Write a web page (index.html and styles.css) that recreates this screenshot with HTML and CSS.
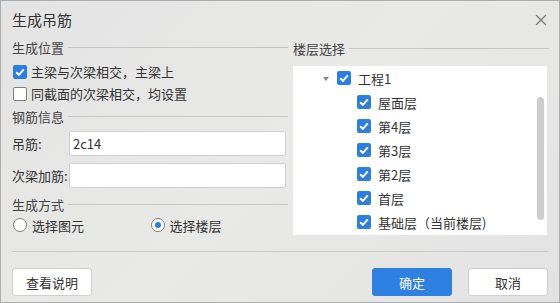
FILE: index.html
```html
<!DOCTYPE html>
<html lang="zh">
<head>
<meta charset="utf-8">
<link rel="stylesheet" href="styles.css">
</head>
<body>
<div class="dialog">
  <div class="header">
    <span class="title">生成吊筋</span>
    <svg class="close" width="12" height="12" viewBox="0 0 12 12"><path d="M1 1L11 11M11 1L1 11" stroke="#7a7a7a" stroke-width="1.3" fill="none"/></svg>
  </div>
  <div class="main">
    <div class="left">
      <div class="sec"><span>生成位置</span><i class="rule"></i></div>
      <label class="row cbrow"><span class="cb on"><svg viewBox="0 0 14 14" width="14" height="14"><path d="M3.2 7.2L5.9 9.8L10.8 4.4" stroke="#fff" stroke-width="2" fill="none"/></svg></span>主梁与次梁相交，主梁上</label>
      <label class="row cbrow"><span class="cb"></span>同截面的次梁相交，均设置</label>
      <div class="sec sec2"><span>钢筋信息</span><i class="rule"></i></div>
      <div class="field"><span class="lbl">吊筋:</span><div class="input">2c14</div></div>
      <div class="field f2"><span class="lbl">次梁加筋:</span><div class="input"></div></div>
      <div class="sec sec3"><span>生成方式</span><i class="rule"></i></div>
      <div class="radios">
        <label class="radio-item"><span class="rd"></span>选择图元</label>
        <label class="radio-item"><span class="rd on"></span>选择楼层</label>
      </div>
    </div>
    <div class="right">
      <div class="sec"><span>楼层选择</span><i class="rule"></i></div>
      <div class="tree">
        <div class="node lv0"><span class="arrow"></span><span class="cb on"><svg viewBox="0 0 14 14" width="14" height="14"><path d="M3.2 7.2L5.9 9.8L10.8 4.4" stroke="#fff" stroke-width="2" fill="none"/></svg></span>工程1</div>
        <div class="node lv1"><span class="cb on"><svg viewBox="0 0 14 14" width="14" height="14"><path d="M3.2 7.2L5.9 9.8L10.8 4.4" stroke="#fff" stroke-width="2" fill="none"/></svg></span>屋面层</div>
        <div class="node lv1"><span class="cb on"><svg viewBox="0 0 14 14" width="14" height="14"><path d="M3.2 7.2L5.9 9.8L10.8 4.4" stroke="#fff" stroke-width="2" fill="none"/></svg></span>第4层</div>
        <div class="node lv1"><span class="cb on"><svg viewBox="0 0 14 14" width="14" height="14"><path d="M3.2 7.2L5.9 9.8L10.8 4.4" stroke="#fff" stroke-width="2" fill="none"/></svg></span>第3层</div>
        <div class="node lv1"><span class="cb on"><svg viewBox="0 0 14 14" width="14" height="14"><path d="M3.2 7.2L5.9 9.8L10.8 4.4" stroke="#fff" stroke-width="2" fill="none"/></svg></span>第2层</div>
        <div class="node lv1"><span class="cb on"><svg viewBox="0 0 14 14" width="14" height="14"><path d="M3.2 7.2L5.9 9.8L10.8 4.4" stroke="#fff" stroke-width="2" fill="none"/></svg></span>首层</div>
        <div class="node lv1"><span class="cb on"><svg viewBox="0 0 14 14" width="14" height="14"><path d="M3.2 7.2L5.9 9.8L10.8 4.4" stroke="#fff" stroke-width="2" fill="none"/></svg></span>基础层（当前楼层)</div>
        <div class="scrollbar"></div>
      </div>
    </div>
  </div>
  <div class="footer">
    <button class="btn">查看说明</button>
    <span class="spacer"></span>
    <button class="btn primary">确定</button>
    <button class="btn">取消</button>
  </div>
</div>
</body>
</html>
```
FILE: styles.css
```css
html, body {
  margin: 0;
  padding: 0;
}
body {
  width: 560px;
  height: 303px;
  font-family: "Noto Sans CJK SC", "Noto Sans", sans-serif;
  font-size: 13px;
  color: #333;
}
.dialog {
  box-sizing: border-box;
  width: 560px;
  height: 303px;
  border: 1px solid #adadad;
  background: linear-gradient(135deg, #e4e4e4 0%, #e9e9e8 50%, #e3e3e3 100%);
  display: flex;
  flex-direction: column;
}
.header {
  height: 37px;
  display: flex;
  align-items: center;
  padding: 0 12px 0 11px;
}
.title {
  font-size: 15px;
  color: #333;
  flex: 1;
  line-height: 20px;
}
.close {
  margin-top: 1px;
}
.main {
  display: flex;
  height: 198px;
}
.left {
  width: 276px;
  padding-left: 11px;
  display: flex;
  flex-direction: column;
}
.right {
  width: 256px;
  margin-left: 5px;
  display: flex;
  flex-direction: column;
}
.sec {
  height: 20px;
  display: flex;
  align-items: center;
  color: #444;
}
.rule {
  flex: 1;
  height: 1px;
  background: #c6c6c6;
  margin-left: 4px;
}
.row {
  display: flex;
  align-items: center;
}
.cbrow {
  height: 22px;
  padding-left: 1px;
}
.cbrow:first-of-type {
  margin-top: 3px;
}
.cb {
  box-sizing: border-box;
  width: 14px;
  height: 14px;
  border-radius: 2px;
  border: 1px solid #7f7f7f;
  background: #fff;
  margin-right: 4px;
  display: inline-flex;
  flex: none;
}
.cb.on {
  border: none;
  background: #2b7fe3;
}
.sec2 {
  margin-top: 2px;
}
.field {
  display: flex;
  align-items: center;
  margin-top: 5px;
  height: 25px;
}
.f2 {
  margin-top: 7px;
}
.lbl {
  width: 57px;
  color: #333;
}
.input {
  box-sizing: border-box;
  width: 217px;
  height: 25px;
  background: #fff;
  border: 1px solid #cfcfcf;
  border-radius: 2px;
  padding-left: 3px;
  line-height: 23px;
  color: #333;
}
.sec3 {
  margin-top: 6px;
}
.radios {
  display: flex;
  height: 22px;
  align-items: center;
  padding-left: 1px;
}
.radio-item {
  display: flex;
  align-items: center;
  width: 140px;
}
.rd {
  box-sizing: border-box;
  width: 14px;
  height: 14px;
  border-radius: 50%;
  border: 1px solid #7f7f7f;
  background: #fff;
  margin-right: 5px;
  display: inline-flex;
  align-items: center;
  justify-content: center;
}
.rd.on::after {
  content: "";
  width: 6px;
  height: 6px;
  border-radius: 50%;
  background: #2b7fe3;
}
.tree {
  position: relative;
  margin-top: 8px;
  height: 169px;
  width: 254px;
  background: #fff;
  overflow: hidden;
}
.node {
  height: 24px;
  display: flex;
  align-items: center;
  color: #333;
}
.node .cb {
  margin-right: 7px;
}
.lv0 {
  padding-left: 30px;
}
.lv1 {
  padding-left: 64px;
}
.arrow {
  width: 0;
  height: 0;
  border-left: 3.5px solid transparent;
  border-right: 3.5px solid transparent;
  border-top: 4px solid #888;
  margin-right: 8px;
  margin-top: 1px;
}
.scrollbar {
  position: absolute;
  left: 244px;
  top: 31px;
  width: 7px;
  height: 123px;
  border-radius: 4px;
  background: #cdcdcd;
}
.footer {
  margin: 15px 11px 0 11px;
  border-top: 1px solid #cbcbcb;
  padding-top: 16px;
  display: flex;
  align-items: center;
}
.spacer {
  flex: 1;
}
.btn {
  box-sizing: border-box;
  width: 80px;
  height: 28px;
  font-family: "Noto Sans CJK SC", "Noto Sans", sans-serif;
  font-size: 13px;
  color: #333;
  background: #fff;
  border: 1px solid #cfcfcf;
  border-radius: 3px;
  padding: 0;
}
.btn.primary {
  background: #2e80e2;
  border-color: #2e80e2;
  color: #fff;
  margin-right: 16px;
}
```
